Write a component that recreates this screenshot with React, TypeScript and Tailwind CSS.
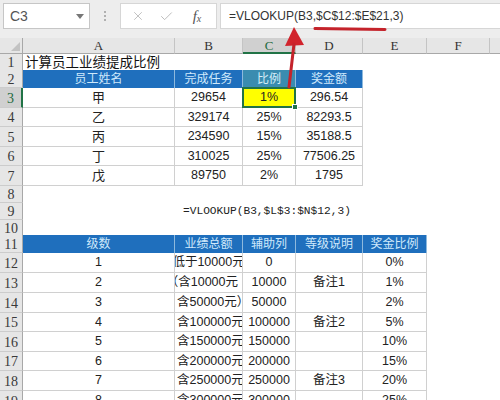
import React from "react";
import { X, Check } from "lucide-react";

const FONT = "font-['Liberation_Sans','Noto_Sans_CJK_SC',sans-serif]";
const GRID = "grid grid-cols-[23px_152px_68px_53px_67px_64px_63px_10px]";
const RH =
  "bg-[#e6e6e6] border-r border-r-[#a8a8a8] border-b border-b-[#cccccc] flex items-center justify-center font-['Liberation_Serif',serif] text-[14px] text-[#3a3a3a] leading-none pt-[2px]";
const RH_SEL =
  "bg-[#d0d0d0] border-r-2 border-r-[#217346] border-b border-b-[#cccccc] flex items-center justify-center font-['Liberation_Serif',serif] text-[14px] text-[#1f6b41] leading-none pt-[2px]";
const CELL =
  "border-r border-b border-[#d0d0d0] flex items-center text-[12.5px] text-[#222] whitespace-nowrap leading-none";
const HEAD =
  "bg-[#1f6fbd] border-r border-r-[#8db9dd] flex items-center justify-center text-[12px] text-[#cfe9fb] whitespace-nowrap leading-none";
const HEAD_TEAL =
  "bg-[#3a8cb0] border-r border-r-[#8db9dd] flex items-center justify-center text-[12px] text-[#d6eef8] whitespace-nowrap leading-none";
const CH =
  "bg-[#e6e6e6] border-r border-r-[#c4c4c4] border-b border-b-[#a8a8a8] flex items-center justify-center font-['Liberation_Serif',serif] text-[13px] text-[#333] leading-none";
const CH_SEL =
  "bg-[#d0d0d0] border-r border-r-[#c4c4c4] border-b-2 border-b-[#217346] flex items-center justify-center font-['Liberation_Serif',serif] text-[13px] text-[#1f6b41] leading-none";

function Row({
  n,
  h,
  sel,
  children,
}: {
  n: number;
  h: string;
  sel?: boolean;
  children?: React.ReactNode;
}) {
  return (
    <div className={`${GRID} ${h}`}>
      <div className={sel ? RH_SEL : RH}>{n}</div>
      {children}
    </div>
  );
}

const upper = [
  ["甲", "29654", "1%", "296.54"],
  ["乙", "329174", "25%", "82293.5"],
  ["丙", "234590", "15%", "35188.5"],
  ["丁", "310025", "25%", "77506.25"],
  ["戊", "89750", "2%", "1795"],
];
const upperH = ["h-[20px]", "h-[19px]", "h-[20px]", "h-[19px]", "h-[20px]"];

const lower = [
  ["1", "低于10000元", "0", "", "0%", "c"],
  ["2", "（含10000元", "10000", "备注1", "1%", "r"],
  ["3", "含50000元）", "50000", "", "2%", "l"],
  ["4", "含100000元", "100000", "备注2", "5%", "l"],
  ["5", "含150000元", "150000", "", "10%", "l"],
  ["6", "含200000元", "200000", "", "15%", "l"],
  ["7", "含250000元", "250000", "备注3", "20%", "l"],
  ["8", "含300000元", "300000", "", "25%", "l"],
];
const lowerH = [
  "h-[20px]",
  "h-[20px]",
  "h-[20px]",
  "h-[19px]",
  "h-[20px]",
  "h-[19px]",
  "h-[20px]",
  "h-[20px]",
];

export default function App() {
  return (
    <div className={`${FONT} w-[500px] h-[400px] overflow-hidden bg-white relative`}>
      {/* formula bar */}
      <div className="h-[38px] bg-[#ededed] flex items-start pt-[3px] pl-[3px]">
        <div className="w-[87px] h-[26px] bg-white border border-[#c6c6c6] flex items-center justify-between pl-[6px] pr-[5px]">
          <span className="text-[14px] text-[#555]">C3</span>
          <svg width="8" height="5" viewBox="0 0 8 5">
            <path d="M0 0 L8 0 L4 5 Z" fill="#777" />
          </svg>
        </div>
        <div className="w-[30px] h-[26px] flex flex-col items-center justify-center gap-[2px]">
          <div className="w-[2px] h-[2px] bg-[#b0b0b0]" />
          <div className="w-[2px] h-[2px] bg-[#b0b0b0]" />
          <div className="w-[2px] h-[2px] bg-[#b0b0b0]" />
        </div>
        <div className="w-[97px] h-[26px] bg-white border border-[#d6d6d6] flex items-center">
          <div className="w-[30px] flex justify-center pl-[4px]">
            <X size={14} strokeWidth={1.4} color="#b4b4b4" />
          </div>
          <div className="w-[30px] flex justify-center">
            <Check size={15} strokeWidth={1.4} color="#b4b4b4" />
          </div>
          <div className="w-[32px] flex justify-center font-['Liberation_Serif',serif] italic text-[#555] leading-none">
            <span className="text-[15px]">f</span>
            <span className="text-[10px] mt-[5px]">x</span>
          </div>
        </div>
        <div className="ml-[3px] flex-1 h-[26px] bg-white border border-[#d6d6d6] border-r-0 flex items-center pl-[8px]">
          <span className="text-[12px] text-[#333]">=VLOOKUP(B3,$C$12:$E$21,3)</span>
        </div>
      </div>

      {/* column headers */}
      <div className={`${GRID} h-[16px]`}>
        <div className="bg-[#e6e6e6] border-r border-r-[#a8a8a8] border-b border-b-[#a8a8a8] flex items-end justify-end pr-[2px] pb-[2px]">
          <svg width="9" height="9" viewBox="0 0 9 9">
            <path d="M9 0 L9 9 L0 9 Z" fill="#c2c2c2" />
          </svg>
        </div>
        <div className={CH}>A</div>
        <div className={CH}>B</div>
        <div className={CH_SEL}>C</div>
        <div className={CH}>D</div>
        <div className={CH}>E</div>
        <div className={CH}>F</div>
        <div className="bg-[#e6e6e6] border-b border-b-[#a8a8a8]" />
      </div>

      {/* row 1 */}
      <Row n={1} h="h-[16px]">
        <div className="flex items-center pl-[2px] whitespace-nowrap text-[13.5px] text-[#111] leading-none">
          计算员工业绩提成比例
        </div>
      </Row>

      {/* row 2 */}
      <Row n={2} h="h-[18px]">
        <div className={HEAD}>员工姓名</div>
        <div className={HEAD}>完成任务</div>
        <div className={HEAD_TEAL}>比例</div>
        <div className={HEAD}>奖金额</div>
      </Row>

      {upper.map((r, i) => (
        <Row key={i} n={i + 3} h={upperH[i]} sel={i === 0}>
          <div className={`${CELL} justify-center text-[13px]`}>{r[0]}</div>
          <div className={`${CELL} justify-center`}>{r[1]}</div>
          {i === 0 ? (
            <div className={`${CELL} justify-center bg-[#ffff00] relative`}>
              {r[2]}
              <div className="absolute -left-[1px] -top-[1px] right-[-1px] bottom-[-1px] border-2 border-[#217346] pointer-events-none" />
              <div className="absolute -right-[3px] -bottom-[3px] w-[6px] h-[6px] bg-[#217346] border border-white" />
            </div>
          ) : (
            <div className={`${CELL} justify-center`}>{r[2]}</div>
          )}
          <div className={`${CELL} justify-center`}>{r[3]}</div>
        </Row>
      ))}

      <Row n={8} h="h-[17px]" />
      <Row n={9} h="h-[17px]">
        <div />
        <div className="flex items-center pl-[8px] whitespace-nowrap font-['Liberation_Mono',monospace] text-[11.2px] text-[#222] leading-none">
          =VLOOKUP(B3,$L$3:$N$12,3)
        </div>
      </Row>
      <Row n={10} h="h-[15px]" />

      {/* row 11 header */}
      <Row n={11} h="h-[18px]">
        <div className={HEAD}>级数</div>
        <div className={HEAD}>业绩总额</div>
        <div className={HEAD}>辅助列</div>
        <div className={HEAD}>等级说明</div>
        <div className={HEAD}>奖金比例</div>
      </Row>

      {lower.map((r, i) => (
        <Row key={i} n={i + 12} h={lowerH[i]}>
          <div className={`${CELL} justify-center`}>{r[0]}</div>
          {r[5] === "c" ? (
            <div className={`${CELL} justify-center overflow-hidden`}>{r[1]}</div>
          ) : r[5] === "r" ? (
            <div className={`${CELL} justify-end pr-[4px] overflow-hidden`}>{r[1]}</div>
          ) : (
            <div className={`${CELL} justify-start pl-[2px] overflow-hidden`}>{r[1]}</div>
          )}
          <div className={`${CELL} justify-center`}>{r[2]}</div>
          <div className={`${CELL} justify-center`}>{r[3]}</div>
          <div className={`${CELL} justify-center`}>{r[4]}</div>
        </Row>
      ))}

      {/* red annotations */}
      <svg
        className="absolute left-0 top-0 pointer-events-none"
        width="500"
        height="400"
        viewBox="0 0 500 400"
      >
        <line x1="315" y1="28.5" x2="385" y2="29.5" stroke="#c4232b" strokeWidth="3" strokeLinecap="round" />
        <path d="M294 27 L285 46 L304 45 Z" fill="#d1232c" />
        <line x1="294" y1="44" x2="289" y2="87" stroke="#c4232b" strokeWidth="3" strokeLinecap="round" />
      </svg>
    </div>
  );
}
